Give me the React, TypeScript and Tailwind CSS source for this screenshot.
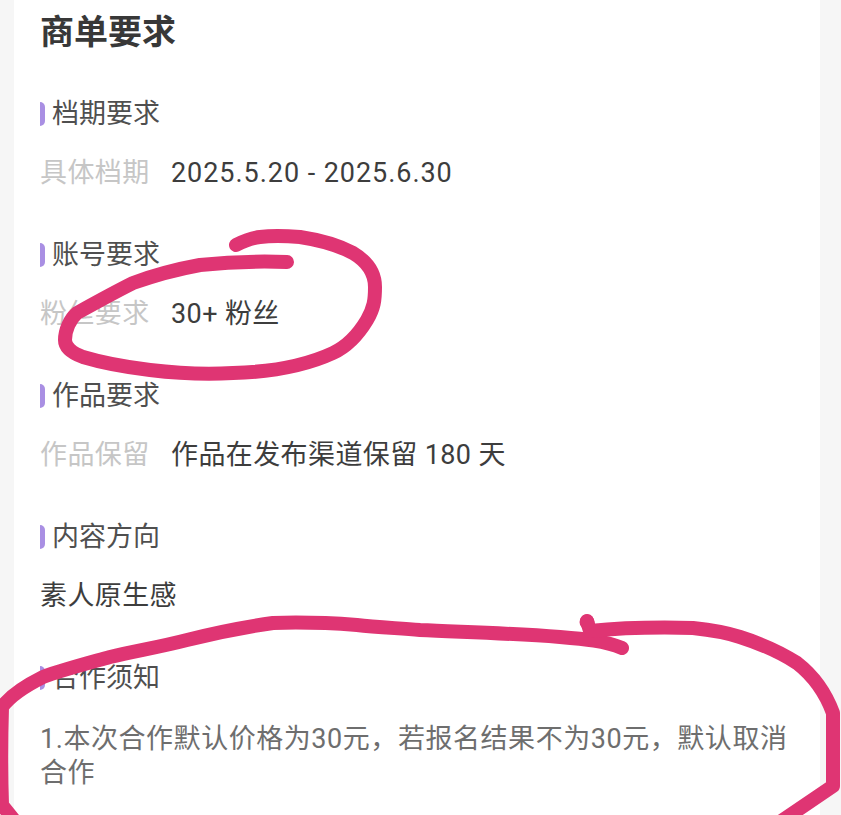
const sections = [
  { title: "档期要求", label: "具体档期", value: "2025.5.20 - 2025.6.30", tight: true },
  { title: "账号要求", label: "粉丝要求", value: "30+ 粉丝" },
  { title: "作品要求", label: "作品保留", value: "作品在发布渠道保留 180 天" },
]

function SectionTitle({ title }: { title: string }) {
  return (
    <div className="flex items-center h-[34px]">
      <span className="w-[5px] h-[24px] rounded-r-full bg-[#a98fe3]" />
      <span className="ml-[7px] text-[27px] leading-[34px] text-[#4f4f4f]">{title}</span>
    </div>
  )
}

export default function App() {
  return (
    <div
      className="relative w-[841px] h-[815px] overflow-hidden bg-[#f6f6f6]"
      style={{ fontFamily: 'Roboto, "Noto Sans CJK SC", "Noto Sans", sans-serif' }}
    >
      <div className="ml-[14px] w-[806px] h-[815px] bg-white pl-[26px] pr-[20px]">
        <h1 className="pt-[10px] text-[34px] leading-[44px] font-bold text-[#383838]">商单要求</h1>

        <div className="mt-[43px] flex flex-col gap-[48px]">
          {sections.map((s) => (
            <div key={s.title}>
              <SectionTitle title={s.title} />
              <div className="mt-[25px] flex h-[34px] items-center text-[27px] leading-[34px]">
                <span className="w-[131px] tracking-[0.4px] text-[#c6c6c6]">{s.label}</span>
                <span className={s.tight ? "text-[#3d3d3d] tracking-[0.95px]" : "text-[#3d3d3d] tracking-[0.4px]"}>
                  {s.value}
                </span>
              </div>
            </div>
          ))}

          <div>
            <SectionTitle title="内容方向" />
            <div className="mt-[25px] h-[34px] text-[27px] leading-[34px] tracking-[0.4px] text-[#3d3d3d]">素人原生感</div>
          </div>

          <div>
            <SectionTitle title="合作须知" />
            <p className="mt-[27px] w-[760px] text-[27px] leading-[34px] tracking-[0.55px] text-[#6e6e6e]">
              1.本次合作默认价格为30元，若报名结果不为30元，默认取消合作
            </p>
          </div>
        </div>
      </div>

      {/* hand-drawn marker strokes over the screenshot */}
      <svg className="absolute inset-0" width="841" height="815" viewBox="0 0 841 815" fill="none">
        <path
          d="M236 245C244 241 251 238 260 237C275 235 288 236 300 237C320 240 338 245 353 253C368 262 375 274 375 287C375 300 374 308 367 320C358 335 348 346 333 353C305 366 270 372 233 373C200 375 175 373 150 370C125 367 103 363 83 357C72 353 65 347 65 340C65 330 70 319 77 313C95 303 115 292 133 283C155 275 178 269 200 265C228 262 258 261 287 262"
          stroke="#df3573"
          strokeWidth="14"
          strokeLinecap="round"
          strokeLinejoin="round"
        />
        <path
          d="M622 648C605 641 585 639 560 637C510 633 460 632 420 630C395 628 375 627 357 625C330 623 300 622 273 623C245 627 215 633 187 640C160 647 135 651 110 657C85 664 62 670 43 677C25 686 10 696 2 707C1 740 1 775 2 805L14 820"
          stroke="#df3573"
          strokeWidth="14"
          strokeLinecap="round"
          strokeLinejoin="round"
        />
        <path
          d="M587 621L590 631C620 628 655 627 693 628C712 630 725 632 740 637C762 644 780 652 797 663C815 677 826 694 833 713L833 786L780 822"
          stroke="#df3573"
          strokeWidth="14"
          strokeLinecap="round"
          strokeLinejoin="round"
        />
        <circle cx="587" cy="622" r="7.5" fill="#df3573" />
      </svg>
    </div>
  )
}
